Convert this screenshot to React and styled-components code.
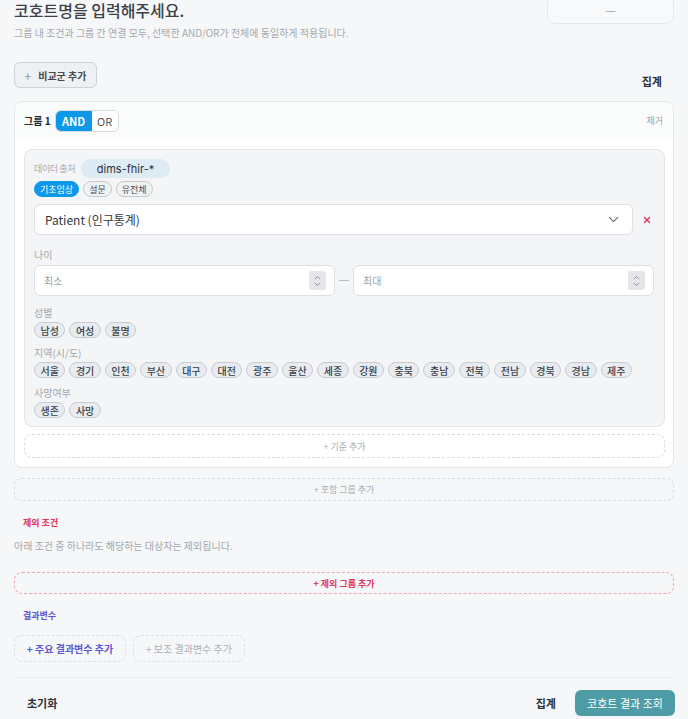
import React from 'react';
import { styled, createGlobalStyle } from 'styled-components';
import { ChevronDown, ChevronUp, X } from 'lucide-react';

const GlobalStyle = createGlobalStyle`
  body {
    margin: 0;
    background: #f6f7f8;
    font-family: "Noto Sans CJK KR", "Noto Sans", sans-serif;
    color: #333;
  }
`;

const SEX = ['남성', '여성', '불명'];
const REGIONS = ['서울', '경기', '인천', '부산', '대구', '대전', '광주', '울산', '세종', '강원', '충북', '충남', '전북', '전남', '경북', '경남', '제주'];
const DEATH = ['생존', '사망'];

function NumberField({ placeholder }) {
    return (
        <NumberBox>
            <span>{placeholder}</span>
            <Spinner>
                <ChevronUp size={9} strokeWidth={2} />
                <ChevronDown size={9} strokeWidth={2} />
            </Spinner>
        </NumberBox>
    );
}

function ChipGroup({ label, items }) {
    return (
        <div>
            <FieldLabel>{label}</FieldLabel>
            <ChipRow>
                {items.map((item) => (
                    <Chip key={item}>{item}</Chip>
                ))}
            </ChipRow>
        </div>
    );
}

function App() {
    return (
        <Page>
            <GlobalStyle />
            <TopRow>
                <div>
                    <Title>코호트명을 입력해주세요.</Title>
                    <Hint>그룹 내 조건과 그룹 간 연결 모두, 선택한 AND/OR가 전체에 동일하게 적용됩니다.</Hint>
                </div>
                <CountBox>—</CountBox>
            </TopRow>

            <ActionRow>
                <CompareButton>
                    <PlusMark>+</PlusMark> 비교군 추가
                </CompareButton>
                <AggText>집계</AggText>
            </ActionRow>

            <GroupCard>
                <GroupHeader>
                    <HeaderLeft>
                        <GroupName>그룹 1</GroupName>
                        <Toggle>
                            <ToggleOption $active>AND</ToggleOption>
                            <ToggleOption>OR</ToggleOption>
                        </Toggle>
                    </HeaderLeft>
                    <RemoveText>제거</RemoveText>
                </GroupHeader>

                <GroupBody>
                    <ConditionBox>
                        <SourceRow>
                            <SmallLabel>데이터 출처</SmallLabel>
                            <SourceChip>dims-fhir-*</SourceChip>
                        </SourceRow>
                        <TabRow>
                            <Tab $active>기초임상</Tab>
                            <Tab>설문</Tab>
                            <Tab>유전체</Tab>
                        </TabRow>
                        <SelectRow>
                            <SelectBox>
                                <span>Patient (인구통계)</span>
                                <ChevronDown size={17} strokeWidth={1.6} color="#5f6670" />
                            </SelectBox>
                            <DeleteMark>
                                <X size={10} strokeWidth={3.2} color="#e2365b" />
                            </DeleteMark>
                        </SelectRow>

                        <AgeLabel>나이</AgeLabel>
                        <RangeRow>
                            <NumberField placeholder="최소" />
                            <RangeDash />
                            <NumberField placeholder="최대" />
                        </RangeRow>

                        <ChipSections>
                            <ChipGroup label="성별" items={SEX} />
                            <ChipGroup label="지역(시/도)" items={REGIONS} />
                            <ChipGroup label="사망여부" items={DEATH} />
                        </ChipSections>
                    </ConditionBox>

                    <DashedAdd $height={24}>+ 기준 추가</DashedAdd>
                </GroupBody>
            </GroupCard>

            <IncludeAdd $height={23}>+ 포함 그룹 추가</IncludeAdd>

            <SectionLabel $color="#e0345b">제외 조건</SectionLabel>
            <ExcludeHint>아래 조건 중 하나라도 해당하는 대상자는 제외됩니다.</ExcludeHint>
            <ExcludeAdd $height={22} $tone="danger">+ 제외 그룹 추가</ExcludeAdd>

            <SectionLabel $color="#6656d6" $top={15}>결과변수</SectionLabel>
            <OutcomeRow>
                <OutcomeButton $primary>+ 주요 결과변수 추가</OutcomeButton>
                <OutcomeButton>+ 보조 결과변수 추가</OutcomeButton>
            </OutcomeRow>

            <Divider />

            <Footer>
                <ResetText>초기화</ResetText>
                <FooterRight>
                    <AggText>집계</AggText>
                    <SubmitButton>코호트 결과 조회</SubmitButton>
                </FooterRight>
            </Footer>
        </Page>
    );
}

const Page = styled.div`
  padding: 0 14px;
  width: 660px;
`;

const TopRow = styled.div`
  display: flex;
  justify-content: space-between;
  align-items: flex-start;
`;

const Title = styled.div`
  font-size: 16px;
  line-height: 20px;
  font-weight: 500;
  color: #3b4047;
`;

const Hint = styled.div`
  margin-top: 6px;
  font-size: 10px;
  line-height: 14px;
  color: #a4a9af;
`;

const CountBox = styled.div`
  width: 127px;
  height: 30px;
  margin-top: -6px;
  border: 1px solid #e6e8eb;
  border-radius: 8px;
  background: #f8f9fa;
  display: flex;
  justify-content: center;
  align-items: center;
  padding-top: 1px;
  box-sizing: border-box;
  color: #9aa0a6;
  font-size: 12px;
`;

const ActionRow = styled.div`
  margin-top: 22px;
  display: flex;
  justify-content: space-between;
  align-items: flex-end;
`;

const CompareButton = styled.div`
  height: 26px;
  width: 83px;
  box-sizing: border-box;
  border: 1px solid #cdd2d8;
  border-radius: 6px;
  background: #eef1f4;
  display: flex;
  align-items: center;
  justify-content: center;
  gap: 7px;
  font-size: 10px;
  font-weight: 700;
  color: #444a52;
`;

const PlusMark = styled.span`
  font-weight: 400;
  color: #8e949b;
  font-size: 12px;
`;

const AggText = styled.div`
  font-size: 11px;
  font-weight: 700;
  color: #2c3036;
  margin-right: 12px;
  line-height: 14px;
`;

const GroupCard = styled.div`
  margin-top: 13px;
  border: 1px solid #e4e6ea;
  border-radius: 8px;
  background: #ffffff;
  overflow: hidden;
`;

const GroupHeader = styled.div`
  height: 37px;
  padding: 0 10px 0 9px;
  display: flex;
  align-items: center;
  justify-content: space-between;
  background: #fafbfb;
`;

const HeaderLeft = styled.div`
  display: flex;
  align-items: center;
  gap: 4px;
`;

const GroupName = styled.div`
  font-size: 10px;
  font-weight: 700;
  color: #23272c;
`;

const Toggle = styled.div`
  display: flex;
  height: 22px;
  width: 64px;
  box-sizing: border-box;
  border: 1px solid #d6d9dd;
  border-radius: 6px;
  overflow: hidden;
`;

const ToggleOption = styled.div`
  flex: ${(p) => (p.$active ? '0 0 36px' : '1')};
  display: flex;
  align-items: center;
  justify-content: center;
  font-size: 11px;
  font-weight: ${(p) => (p.$active ? 700 : 400)};
  background: ${(p) => (p.$active ? '#0e98ea' : '#ffffff')};
  color: ${(p) => (p.$active ? '#ffffff' : '#4a5058')};
`;

const RemoveText = styled.div`
  font-size: 9px;
  color: #9ba0a6;
`;

const GroupBody = styled.div`
  padding: 10px 8px 9px 9px;
`;

const ConditionBox = styled.div`
  background: #f4f5f7;
  border: 1px solid #e2e4e8;
  border-radius: 8px;
  padding: 9px 10px 8px 9px;
`;

const SourceRow = styled.div`
  display: flex;
  align-items: center;
  gap: 6px;
`;

const SmallLabel = styled.div`
  font-size: 9px;
  letter-spacing: -0.4px;
  color: #a6abb1;
`;

const SourceChip = styled.div`
  height: 19px;
  width: 89px;
  border-radius: 10px;
  background: #dcebf4;
  display: flex;
  align-items: center;
  justify-content: center;
  font-family: "Inter", "Noto Sans", sans-serif;
  font-size: 11px;
  color: #2c3238;
`;

const TabRow = styled.div`
  margin-top: 3px;
  display: flex;
  gap: 4px;
`;

const Tab = styled.div`
  height: 16px;
  box-sizing: border-box;
  padding: 0 5px;
  border-radius: 8px;
  display: flex;
  align-items: center;
  font-size: 9px;
  border: 1px solid ${(p) => (p.$active ? '#0e98ea' : '#c6cace')};
  background: ${(p) => (p.$active ? '#0e98ea' : '#f0f2f4')};
  color: ${(p) => (p.$active ? '#ffffff' : '#454b52')};
`;

const SelectRow = styled.div`
  margin-top: 7px;
  display: flex;
  align-items: center;
  gap: 7px;
`;

const SelectBox = styled.div`
  flex: 1;
  height: 31px;
  box-sizing: border-box;
  border: 1px solid #dcdfe3;
  border-radius: 6px;
  background: #ffffff;
  padding: 0 10px 0 10px;
  display: flex;
  align-items: center;
  justify-content: space-between;
  font-size: 12px;
  font-weight: 400;
  color: #343a41;
`;

const DeleteMark = styled.div`
  width: 14px;
  display: flex;
  justify-content: center;
`;

const FieldLabel = styled.div`
  font-size: 10px;
  line-height: 14px;
  color: #a2a7ad;
`;

const AgeLabel = styled(FieldLabel)`
  margin-top: 13px;
  margin-bottom: 3px;
`;

const RangeRow = styled.div`
  display: flex;
  align-items: center;
  gap: 4px;
`;

const NumberBox = styled.div`
  flex: 1;
  height: 31px;
  box-sizing: border-box;
  border: 1px solid #dcdfe3;
  border-radius: 6px;
  background: #ffffff;
  padding: 0 8px 0 9px;
  display: flex;
  align-items: center;
  justify-content: space-between;
  font-size: 10px;
  color: #9ca1a7;
`;

const Spinner = styled.div`
  width: 17px;
  height: 19px;
  background: #e4e6e9;
  border-radius: 2px;
  display: flex;
  flex-direction: column;
  align-items: center;
  justify-content: center;
  color: #6b7178;
  line-height: 0;
  & > svg { margin: -1px 0; }
`;

const RangeDash = styled.div`
  width: 10px;
  height: 1px;
  background: #b9bec4;
`;

const ChipSections = styled.div`
  margin-top: 10px;
  display: flex;
  flex-direction: column;
  gap: 8px;
`;

const ChipRow = styled.div`
  margin-top: 2px;
  display: flex;
  flex-wrap: wrap;
  gap: 4px;
`;

const Chip = styled.div`
  height: 16px;
  box-sizing: border-box;
  padding: 0 5.5px;
  border: 1px solid #c7cbd1;
  border-radius: 8px;
  background: #e8ecf0;
  display: flex;
  align-items: center;
  font-size: 10px;
  font-weight: 500;
  color: #3a4047;
`;

const DashedAdd = styled.div`
  margin-top: 7px;
  height: ${(p) => p.$height}px;
  box-sizing: border-box;
  border: 1px dashed ${(p) => (p.$tone === 'danger' ? '#f0a5b5' : '#d9dce0')};
  border-radius: 8px;
  display: flex;
  align-items: center;
  justify-content: center;
  font-size: 9px;
  font-weight: ${(p) => (p.$tone === 'danger' ? 700 : 400)};
  color: ${(p) => (p.$tone === 'danger' ? '#e23a5c' : '#a8adb3')};
`;

const IncludeAdd = styled(DashedAdd)`
  margin-top: 10px;
`;

const ExcludeAdd = styled(DashedAdd)`
  margin-top: 19px;
`;

const SectionLabel = styled.div`
  margin-top: ${(p) => p.$top || 15}px;
  padding-left: 9px;
  font-size: 9px;
  line-height: 14px;
  font-weight: 700;
  color: ${(p) => p.$color};
`;

const ExcludeHint = styled.div`
  margin-top: 9px;
  font-size: 10px;
  line-height: 14px;
  color: #a3a8ae;
`;

const OutcomeRow = styled.div`
  margin-top: 12px;
  display: flex;
  gap: 7px;
`;

const OutcomeButton = styled.div`
  height: 27px;
  width: 112px;
  box-sizing: border-box;
  border: 1px dashed #dcdfe4;
  border-radius: 8px;
  display: flex;
  align-items: center;
  justify-content: center;
  font-size: 10px;
  font-weight: ${(p) => (p.$primary ? 700 : 400)};
  color: ${(p) => (p.$primary ? '#5a58d2' : '#adb2b8')};
`;

const Divider = styled.div`
  margin-top: 15px;
  height: 1px;
  background: #e8eaed;
`;

const Footer = styled.div`
  margin-top: 12px;
  display: flex;
  align-items: center;
  justify-content: space-between;
`;

const ResetText = styled.div`
  padding-left: 13px;
  font-size: 11px;
  font-weight: 700;
  color: #2c3036;
`;

const FooterRight = styled.div`
  display: flex;
  align-items: center;
  gap: 7px;
`;

const SubmitButton = styled.div`
  width: 100px;
  height: 26px;
  margin-right: -1px;
  border-radius: 6px;
  background: #4e9da6;
  color: #ffffff;
  font-size: 11px;
  display: flex;
  align-items: center;
  justify-content: center;
`;

export default App;
